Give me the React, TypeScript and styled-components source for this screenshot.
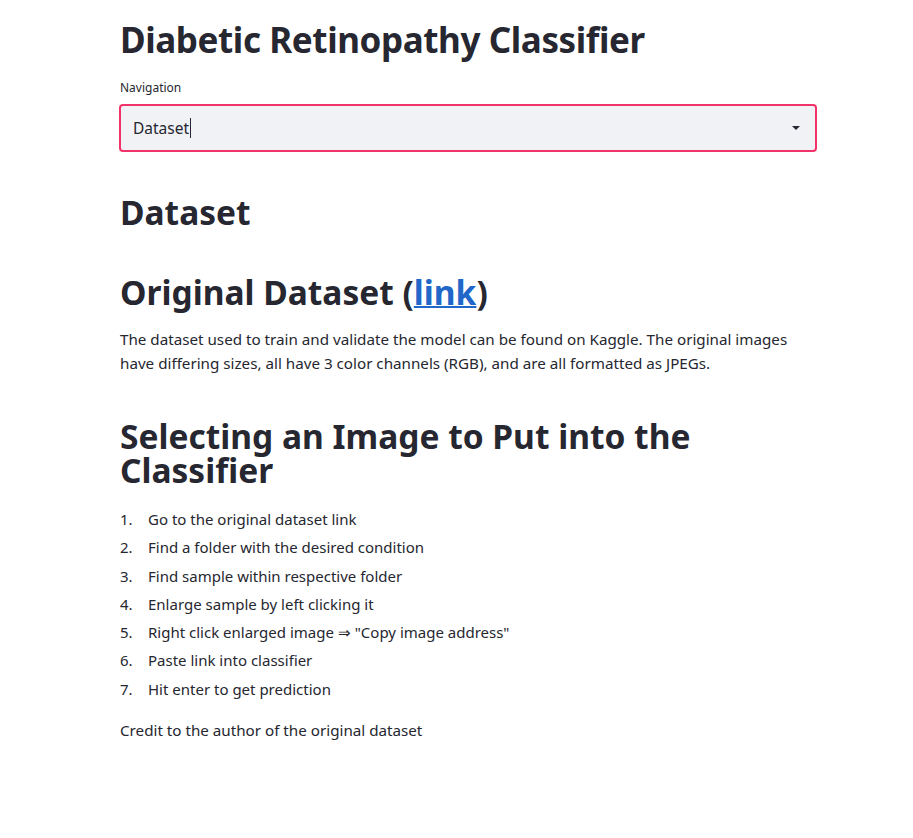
import React from "react";
import styled, { createGlobalStyle } from "styled-components";

const Global = createGlobalStyle`
  html, body { margin: 0; padding: 0; background: #ffffff; }
  body { font-family: "Noto Sans", "Open Sans", sans-serif; color: #262730; }
`;

const Main = styled.main`
  width: 698px;
  margin: 0 0 0 119px;
  padding: 14px 0 60px 0;
  display: flex;
  flex-direction: column;
`;

const Title = styled.h1`
  margin: 0 0 0 1px;
  font-size: 35px;
  line-height: 52px;
  font-weight: 700;
  letter-spacing: -0.4px;
`;

const Field = styled.div`
  margin-top: 13px;
  display: flex;
  flex-direction: column;
`;

const Label = styled.label`
  font-size: 12px;
  line-height: 18px;
  margin: 0 0 7px 1px;
`;

const SelectBox = styled.div`
  height: 48px;
  box-sizing: border-box;
  border: 2px solid #f0346a;
  border-radius: 4px;
  background: #f0f2f6;
  display: flex;
  align-items: center;
  padding: 0 14px 0 12px;
  font-size: 15.5px;
`;

const Value = styled.span`
  flex: 1;
  display: flex;
  align-items: center;
`;

const Caret = styled.span`
  display: inline-block;
  width: 1px;
  height: 20px;
  background: #262730;
  margin-left: 1px;
`;

const H2 = styled.h2<{ $top: number; $lh?: number }>`
  margin: ${(p) => p.$top}px 0 0 1px;
  font-size: 33.5px;
  line-height: ${(p) => p.$lh ?? 48}px;
  font-weight: 700;
`;

const Link = styled.a`
  color: #2166c9;
  text-decoration: underline;
  text-decoration-thickness: 2px;
`;

const Para = styled.p<{ $top: number }>`
  margin: ${(p) => p.$top}px 0 0 1px;
  font-size: 15.2px;
  line-height: 24px;
`;

const List = styled.ol`
  margin: 20px 0 0 1px;
  padding: 0;
  list-style: none;
  font-size: 15px;
  line-height: 24.3px;
  display: flex;
  flex-direction: column;
  gap: 4px;
`;

const Item = styled.li`
  display: flex;
`;

const Num = styled.span`
  width: 28px;
  flex: none;
`;

const steps = [
  "Go to the original dataset link",
  "Find a folder with the desired condition",
  "Find sample within respective folder",
  "Enlarge sample by left clicking it",
  'Right click enlarged image ⇒ "Copy image address"',
  "Paste link into classifier",
  "Hit enter to get prediction",
];

export default function App() {
  return (
    <>
      <Global />
      <Main>
        <Title>Diabetic Retinopathy Classifier</Title>
        <Field>
          <Label>Navigation</Label>
          <SelectBox>
            <Value>
              Dataset
              <Caret />
            </Value>
            <svg width="10" height="6" viewBox="0 0 10 6">
              <path d="M1 1 L9 1 L5 5 Z" fill="#262730" />
            </svg>
          </SelectBox>
        </Field>
        <H2 $top={36}>Dataset</H2>
        <H2 $top={32}>
          Original Dataset (<Link href="#">link</Link>)
        </H2>
        <Para $top={11}>
          The dataset used to train and validate the model can be found on Kaggle. The original images have differing
          sizes, all have 3 color channels (RGB), and are all formatted as JPEGs.
        </Para>
        <H2 $top={44} $lh={34}>
          Selecting an Image to Put into the Classifier
        </H2>
        <List>
          {steps.map((s, i) => (
            <Item key={i}>
              <Num>{i + 1}.</Num>
              <span>{s}</span>
            </Item>
          ))}
        </List>
        <Para $top={17}>Credit to the author of the original dataset</Para>
      </Main>
    </>
  );
}
